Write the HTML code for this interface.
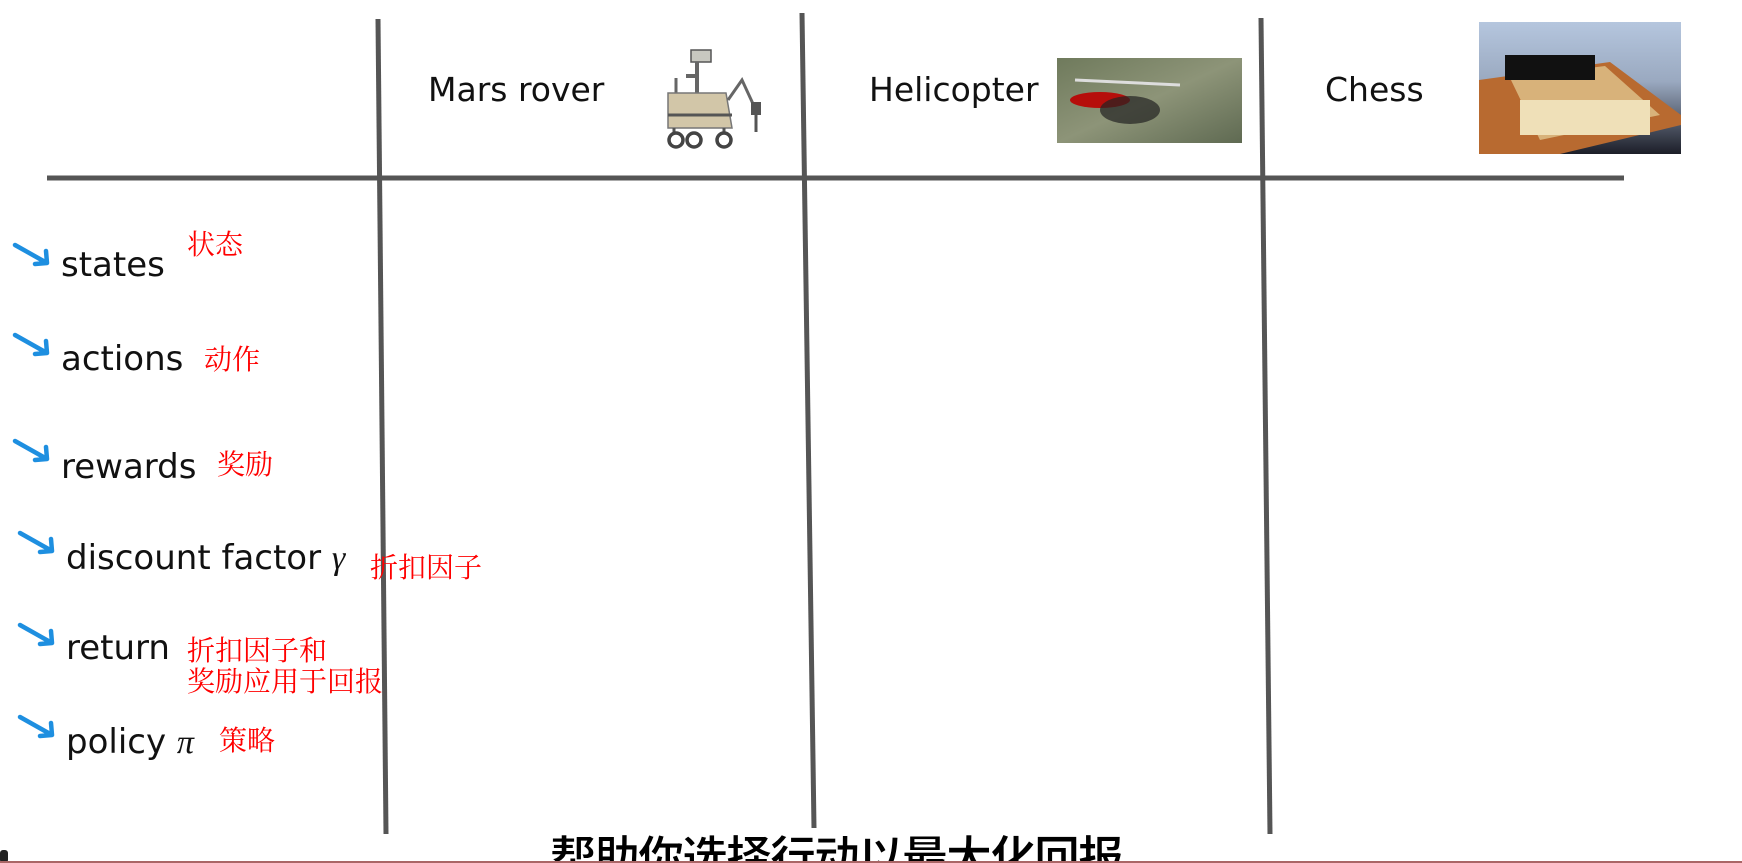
<!DOCTYPE html>
<html><head><meta charset="utf-8"><style>
html,body{margin:0;padding:0;width:1742px;height:863px;background:#fff;overflow:hidden;position:relative}
.t{position:absolute;font-family:"DejaVu Sans","Liberation Sans",sans-serif;color:#111;line-height:1;white-space:nowrap}
.h{font-size:33px}
.l{font-size:34px}
.r{position:absolute;font-family:"Liberation Serif","Noto Serif CJK SC",serif;color:#f00;font-size:28px;line-height:31px;white-space:nowrap}
i.m{font-family:"Liberation Serif","DejaVu Serif",serif;font-style:italic}
.sub{position:absolute;left:550px;top:835px;font-family:"Liberation Sans","Noto Sans CJK SC",sans-serif;font-size:46px;font-weight:bold;color:#000;-webkit-text-stroke:1px #fff;letter-spacing:-2px;line-height:1;white-space:nowrap}
</style></head><body>
<svg width="1742" height="863" style="position:absolute;left:0;top:0">
<g stroke="#555" stroke-width="5" fill="none">
<line x1="47" y1="178" x2="1624" y2="178"/>
<line x1="378" y1="19" x2="386" y2="834"/>
<line x1="802" y1="13" x2="814" y2="828"/>
<line x1="1261" y1="18" x2="1270" y2="834"/>
</g>
<g stroke="#1e8fe0" stroke-width="4.5" fill="none" stroke-linecap="round" stroke-linejoin="round">
<path d="M15 245 L47 263 M35 264 L47 263 L46 251"/>
<path d="M15 335 L47 353 M35 354 L47 353 L46 341"/>
<path d="M15 441 L47 459 M35 460 L47 459 L46 447"/>
<path d="M20 533 L52 551 M40 552 L52 551 L51 539"/>
<path d="M20 625 L52 643 M40 644 L52 643 L51 631"/>
<path d="M20 717 L52 735 M40 736 L52 735 L51 723"/>
</g>
<g transform="translate(664,48)">
<rect x="27" y="2" width="20" height="12" fill="#c8c8c0" stroke="#555" stroke-width="1.5"/>
<line x1="33" y1="14" x2="33" y2="50" stroke="#666" stroke-width="4"/>
<line x1="22" y1="28" x2="35" y2="28" stroke="#666" stroke-width="4"/>
<line x1="12" y1="30" x2="12" y2="45" stroke="#666" stroke-width="3"/>
<path d="M4 45 L62 45 L68 80 L4 80 Z" fill="#d2c6a8" stroke="#777" stroke-width="1.5"/>
<line x1="4" y1="67" x2="68" y2="67" stroke="#555" stroke-width="3"/>
<path d="M64 52 L78 32 L90 58" stroke="#666" stroke-width="3" fill="none"/>
<rect x="87" y="54" width="10" height="13" fill="#555"/>
<line x1="92" y1="67" x2="92" y2="84" stroke="#555" stroke-width="3"/>
<line x1="10" y1="80" x2="10" y2="88" stroke="#555" stroke-width="3"/>
<line x1="60" y1="80" x2="60" y2="88" stroke="#555" stroke-width="3"/>
<circle cx="12" cy="92" r="7" fill="#fff" stroke="#444" stroke-width="3.5"/>
<circle cx="30" cy="92" r="7" fill="#fff" stroke="#444" stroke-width="3.5"/>
<circle cx="60" cy="92" r="7" fill="#fff" stroke="#444" stroke-width="3.5"/>
</g>
<defs>
<linearGradient id="hg" x1="0" y1="0" x2="1" y2="1"><stop offset="0" stop-color="#6f7a5c"/><stop offset=".5" stop-color="#8d9478"/><stop offset="1" stop-color="#5f6a52"/></linearGradient>
<linearGradient id="cg" x1="0" y1="0" x2="0" y2="1"><stop offset="0" stop-color="#b5c6de"/><stop offset=".45" stop-color="#9aa9c0"/><stop offset="1" stop-color="#1c1e28"/></linearGradient>
</defs>
<rect x="1057" y="58" width="185" height="85" fill="url(#hg)"/>
<ellipse cx="1100" cy="100" rx="30" ry="8" fill="#b00" opacity=".9"/>
<ellipse cx="1130" cy="110" rx="30" ry="14" fill="#222" opacity=".7"/>
<line x1="1075" y1="80" x2="1180" y2="85" stroke="#ddd" stroke-width="3"/>
<rect x="1479" y="22" width="202" height="132" fill="url(#cg)"/>
<path d="M1479 80 L1610 62 L1681 115 L1681 125 L1560 154 L1479 154 Z" fill="#b86a30"/>
<path d="M1510 78 L1605 66 L1660 115 L1540 140 Z" fill="#d8b27a"/>
<g fill="#111"><rect x="1505" y="55" width="90" height="25"/></g>
<g fill="#efe0b8"><rect x="1520" y="100" width="130" height="35"/></g>
</svg>
<div class="t h" style="left:428px;top:73px">Mars rover</div>
<div class="t h" style="left:869px;top:73px">Helicopter</div>
<div class="t h" style="left:1325px;top:73px">Chess</div>
<div class="t l" style="left:61px;top:248px">states</div>
<div class="t l" style="left:61px;top:342px">actions</div>
<div class="t l" style="left:61px;top:450px">rewards</div>
<div class="t l" style="left:66px;top:541px">discount factor <i class="m">γ</i></div>
<div class="t l" style="left:66px;top:631px">return</div>
<div class="t l" style="left:66px;top:725px">policy <i class="m">π</i></div>
<div class="r" style="left:187px;top:230px">状态</div>
<div class="r" style="left:204px;top:345px">动作</div>
<div class="r" style="left:217px;top:450px">奖励</div>
<div class="r" style="left:370px;top:553px">折扣因子</div>
<div class="r" style="left:187px;top:636px">折扣因子和<br>奖励应用于回报</div>
<div class="r" style="left:219px;top:726px">策略</div>
<div class="sub">帮助你选择行动以最大化回报</div>
<div style="position:absolute;left:0;top:850px;width:8px;height:13px;background:#222;border-radius:3px"></div>
<div style="position:absolute;left:0;top:861px;width:1742px;height:2px;background:#a66"></div>
</body></html>
